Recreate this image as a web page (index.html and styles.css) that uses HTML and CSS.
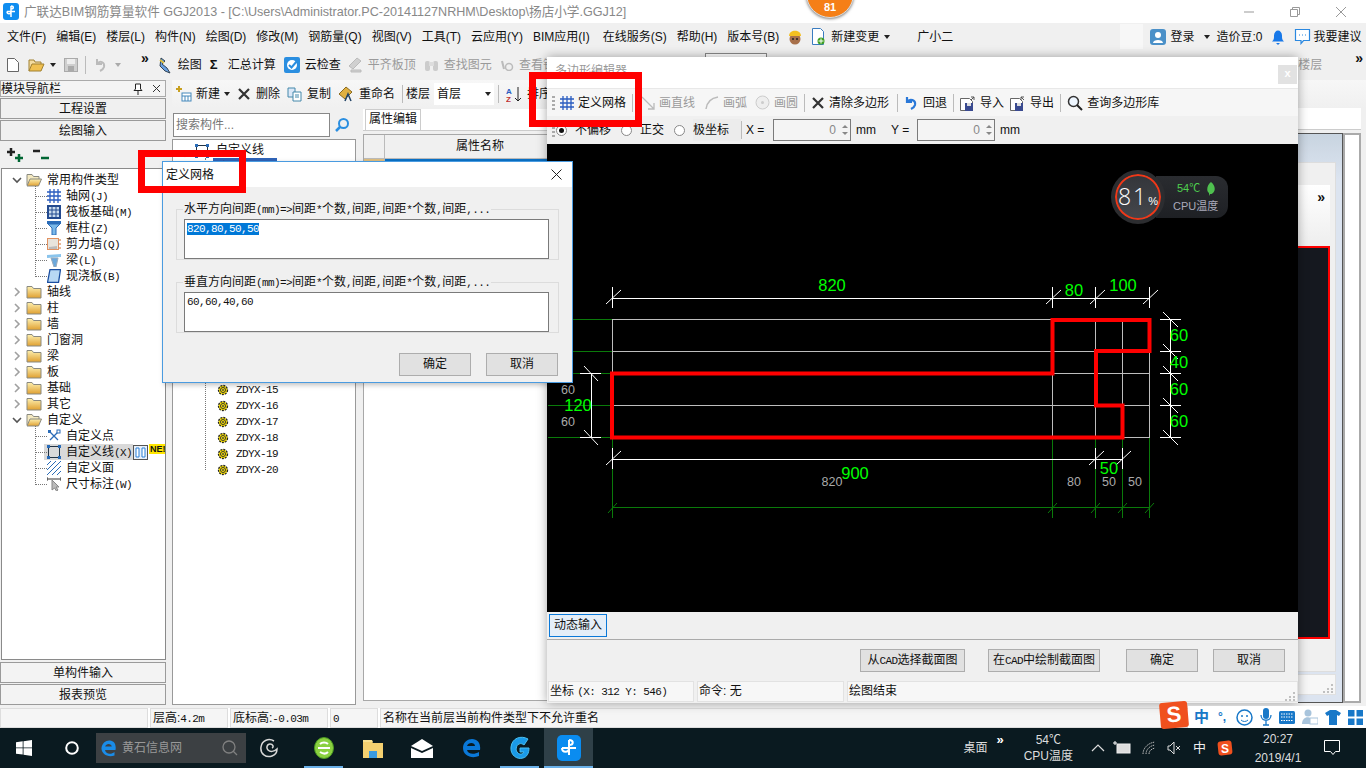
FILE: index.html
```html
<!DOCTYPE html>
<html lang="zh-CN">
<head>
<meta charset="utf-8">
<title>广联达BIM钢筋算量软件</title>
<link rel="stylesheet" href="styles.css">
</head>
<body>
<svg class="defs" width="0" height="0" aria-hidden="true">
  <defs>
    <linearGradient id="fg" x1="0" y1="0" x2="0" y2="1"><stop offset="0" stop-color="#fdf0b0"/><stop offset="1" stop-color="#e0a030"/></linearGradient>
    <symbol id="folder" viewBox="0 0 16 14"><path d="M1 3.500V1.500h5l1.500 2H15V13H1z" fill="url(#fg)" stroke="#8a8a80"/></symbol>
    <symbol id="folderopen" viewBox="0 0 16 14"><path d="M1 12V1.500h5l1.500 2H13V6" fill="#f4e9c0" stroke="#8a8a80"/><path d="M1 13 4 6h11.500l-3 7z" fill="url(#fg)" stroke="#8a8a80"/></symbol>
    <symbol id="gear" viewBox="0 0 12 12"><circle cx="6" cy="6" r="4.500" fill="#ffe600" stroke="#222" stroke-width="1.300" stroke-dasharray="2 1"/><circle cx="6" cy="6" r="2.500" fill="#ffe600" stroke="#333"/><circle cx="6" cy="6" r="1" fill="#444"/></symbol>
    <symbol id="chevr" viewBox="0 0 8 10"><path d="M2 1l4 4-4 4" fill="none" stroke="#a0a0a0" stroke-width="1.600"/></symbol>
    <symbol id="chevd" viewBox="0 0 10 8"><path d="M1 2l4 4 4-4" fill="none" stroke="#555" stroke-width="1.600"/></symbol>
    <symbol id="grid" viewBox="0 0 14 14"><path d="M0 3h14M0 7h14M0 11h14M3 0v14M7 0v14M11 0v14" stroke="#2a5cc0" stroke-width="1.300" fill="none"/></symbol>
    <symbol id="cross" viewBox="0 0 14 14"><path d="M2 2l10 10M12 2 2 12" stroke="#333" stroke-width="2.200" fill="none"/></symbol>
    <symbol id="cgrip" viewBox="0 0 10 10"><path d="M8 1h2v2H8zM4 5h2v2H4zM8 5h2v2H8zM0 8h2v2H0zM4 8h2v2H4zM8 8h2v2H8z" fill="#c0c0c0"/></symbol>
  </defs>
</svg>

<div class="app">
  <header class="titlebar">
    <svg class="appicon" width="16" height="17" viewBox="0 0 16 17"><rect width="16" height="17" rx="3" fill="#0f8df0"/><path d="M8 3v11M4 8.500h8M8 3c3 0 3 3 0 3M4 8.500c0 3 4 3 4 0" fill="none" stroke="#fff" stroke-width="1.500"/></svg>
    <span class="titletext">广联达BIM钢筋算量软件 GGJ2013 - [C:\Users\Administrator.PC-20141127NRHM\Desktop\扬店小学.GGJ12]</span>
    <div class="winctl">
      <svg width="12" height="12" viewBox="0 0 12 12"><path d="M1 6h10" stroke="#999"/></svg>
      <svg width="12" height="12" viewBox="0 0 12 12"><path d="M1.500 3.500h7v7h-7zM3.500 3.500v-2h7v7h-2" fill="none" stroke="#999"/></svg>
      <svg width="12" height="12" viewBox="0 0 12 12"><path d="M1 1l10 10M11 1 1 11" stroke="#999"/></svg>
    </div>
  </header>

  <nav class="menubar">
    <span>文件(F)</span><span>编辑(E)</span><span>楼层(L)</span><span>构件(N)</span><span>绘图(D)</span><span>修改(M)</span><span>钢筋量(Q)</span><span>视图(V)</span><span>工具(T)</span><span>云应用(Y)</span><span>BIM应用(I)</span><span class="m-online">在线服务(S)</span><span>帮助(H)</span><span>版本号(B)</span>
    <svg class="m-hat" width="16" height="16" viewBox="0 0 16 16"><circle cx="8" cy="10" r="5.500" fill="#a8704a"/><path d="M2 7c0-7 12-7 12 0z" fill="#f4c020"/><circle cx="6" cy="10" r="1" fill="#222"/><circle cx="10" cy="10" r="1" fill="#222"/></svg>
    <span class="m-new"><svg width="15" height="18" viewBox="0 0 15 18"><path d="M1.500.500h8l3 3v13h-11z" fill="#fff" stroke="#3a7cc0"/><circle cx="10" cy="13" r="3.500" fill="#3fa020"/><path d="M10 10.500v5M7.500 13h5" stroke="#fff"/></svg>新建变更<i class="caret m-caret"></i></span>
    <span class="m-xiao">广小二</span>
    <span class="m-blank"></span>
    <span class="m-user"><svg width="16" height="16" viewBox="0 0 16 16"><rect width="16" height="16" rx="3" fill="#4a90c8"/><circle cx="8" cy="6" r="3" fill="#fff"/><path d="M3 14c0-4 10-4 10 0z" fill="#fff"/></svg>登录<i class="caret m-caret2"></i></span>
    <span class="m-bean">造价豆:0</span>
    <svg class="m-bell" width="14" height="16" viewBox="0 0 14 16"><path d="M1 12.500c2-1.500 2-3 2-6s2-5 4-5 4 2 4 5 0 4.500 2 6z" fill="#1878e8"/><path d="M5 14h4l-2 2z" fill="#1878e8"/></svg>
    <svg class="m-chat" width="17" height="17" viewBox="0 0 17 17"><path d="M1.500 1.500h14v11h-6l-2.500 3v-3h-5.500z" fill="#fff" stroke="#2a88e0" stroke-width="1.200"/><path d="M5 7h1M8 7h1M11 7h1" stroke="#2a88e0"/></svg>
    <span class="m-sug">我要建议</span>
  </nav>

  <div class="toolbar1">
    <svg width="12" height="14" viewBox="0 0 12 14"><path d="M.500.500h7l4 4v9h-11z" fill="#fff" stroke="#666"/></svg>
    <svg class="t1-open" width="17" height="14" viewBox="0 0 17 14"><path d="M1 13V2h5l1 2h6v2" fill="#f4dca0" stroke="#a08030"/><path d="M1 13l3-7h12l-3 7z" fill="#f0c050" stroke="#a08030"/></svg>
    <i class="caret t1-c1"></i>
    <svg width="14" height="14" viewBox="0 0 14 14"><rect x=".5" y=".5" width="13" height="13" fill="#cfcfcf" stroke="#aaa"/><rect x="3" y="1" width="8" height="5" fill="#eee"/><rect x="4" y="8" width="6" height="5" fill="#aaa"/></svg>
    <i class="vsep t1-sep"></i>
    <svg width="12" height="14" viewBox="0 0 12 14"><path d="M3 1v5h5M3 6c3-4 8-2 7 3-.5 2-2 3-4 4" fill="none" stroke="#bbb" stroke-width="2"/></svg>
    <i class="caret grey t1-c2"></i>
    <b class="more t1-more">»</b>
    <span class="tg"><svg width="16" height="17" viewBox="0 0 16 17"><path d="M4 1l4 3-3 3 5 4 3 5-5-2-5-5z" fill="#6aa0e0" stroke="#345"/><path d="M3 3l4 3" stroke="#e0c040" stroke-width="2"/></svg>绘图</span>
    <span class="tg"><b class="sigma">Σ</b>汇总计算</span>
    <span class="tg"><svg width="16" height="16" viewBox="0 0 16 16"><rect width="16" height="16" rx="2" fill="#2a8ee0"/><circle cx="8" cy="8" r="5" fill="#fff"/><path d="M5 8l2.500 2.500L13 4" fill="none" stroke="#2a8ee0" stroke-width="2"/></svg>云检查</span>
    <span class="tg off t1-flat"><svg width="15" height="16" viewBox="0 0 15 16"><path d="M1 9l8-8 4 3-8 8zM3 13h10v2H3z" fill="#d0d0d0" stroke="#bbb"/></svg>平齐板顶</span>
    <span class="tg off"><svg width="15" height="14" viewBox="0 0 15 14"><rect x="1" y="3" width="5" height="10" rx="2" fill="#ccc"/><rect x="9" y="3" width="5" height="10" rx="2" fill="#ccc"/><rect x="5" y="4" width="5" height="4" fill="#ddd"/></svg>查找图元</span>
    <span class="tg off t1-look"><svg width="14" height="12" viewBox="0 0 14 12"><circle cx="9" cy="8" r="3.500" fill="none" stroke="#bbb" stroke-width="1.500"/><path d="M2 2l2 8" stroke="#bbb" stroke-width="2"/></svg>查看钢</span>
    <span class="tb-box"></span>
    <span class="tb-right"><span class="off">楼层</span><b class="more t1-more2">»</b></span>
  </div>

  <main class="main">
    <aside class="nav">
      <div class="navhead"><span>模块导航栏</span><span class="navpin">
        <svg width="10" height="12" viewBox="0 0 10 12"><path d="M2.500 1h5v5l1.500 1.500H1L2.500 6zM5 8v4" fill="#fff" stroke="#222"/></svg>
        <svg width="9" height="9" viewBox="0 0 9 9"><path d="M1 1l7 7M8 1 1 8" stroke="#333"/></svg></span></div>
      <div class="navbtn">工程设置</div>
      <div class="navbtn">绘图输入</div>
      <div class="navtools">
        <svg width="20" height="15" viewBox="0 0 20 15"><path d="M12 7v8M8 11h8" stroke="#063" stroke-width="2.500"/><path d="M4 1v8M0 5h8" stroke="#222" stroke-width="2.500"/></svg>
        <svg width="17" height="13" viewBox="0 0 17 13"><path d="M0 3h7" stroke="#222" stroke-width="2.500"/><path d="M8 10h8" stroke="#063" stroke-width="2.500"/></svg>
      </div>
      <div class="tree">
        <div class="tr"><svg class="ch" width="10" height="8"><use href="#chevd"/></svg><svg class="fd" width="16" height="14"><use href="#folderopen"/></svg>常用构件类型</div>
        <div class="kids">
          <div class="tc"><svg width="14" height="14"><use href="#grid"/></svg><span>轴网<span class="m">(J)</span></span></div>
          <div class="tc"><svg width="14" height="14" viewBox="0 0 14 14"><rect x="1" y="1" width="12" height="12" fill="#cde" stroke="#234a90" stroke-width="2"/><path d="M1 5h12M1 9h12M5 1v12M9 1v12" stroke="#234a90"/></svg><span>筏板基础<span class="m">(M)</span></span></div>
          <div class="tc"><svg width="14" height="14" viewBox="0 0 14 14"><path d="M0 0h14v3H0z" fill="#2a6cb8"/><path d="M1 3h12L9 7v7H5V7z" fill="#7ab8e8" stroke="#2a6cb8"/></svg><span>框柱<span class="m">(Z)</span></span></div>
          <div class="tc"><svg width="14" height="14" viewBox="0 0 14 14"><rect x=".5" y="1.500" width="11" height="11" fill="#e8e4dc" stroke="#e09060"/><path d="M2 10l8-1v3H2z" fill="#bbb"/><path d="M13 2v10" stroke="#d07030" stroke-dasharray="2 2"/></svg><span>剪力墙<span class="m">(Q)</span></span></div>
          <div class="tc"><svg width="14" height="14" viewBox="0 0 14 14"><path d="M0 2l14-1v3L0 5z" fill="#8ac4ec"/><path d="M4 5h7L9 14H7z" fill="#6aa8dc" stroke="#9ab"/></svg><span>梁<span class="m">(L)</span></span></div>
          <div class="tc"><svg width="14" height="14" viewBox="0 0 14 14"><path d="M3 .5h10.500l-2 13H.5z" fill="#b8d8f4" stroke="#1a4ea0" stroke-width="1.300"/></svg><span>现浇板<span class="m">(B)</span></span></div>
        </div>
        <div class="tr"><svg class="ch" width="8" height="10"><use href="#chevr"/></svg><svg class="fd" width="16" height="14"><use href="#folder"/></svg>轴线</div>
        <div class="tr"><svg class="ch" width="8" height="10"><use href="#chevr"/></svg><svg class="fd" width="16" height="14"><use href="#folder"/></svg>柱</div>
        <div class="tr"><svg class="ch" width="8" height="10"><use href="#chevr"/></svg><svg class="fd" width="16" height="14"><use href="#folder"/></svg>墙</div>
        <div class="tr"><svg class="ch" width="8" height="10"><use href="#chevr"/></svg><svg class="fd" width="16" height="14"><use href="#folder"/></svg>门窗洞</div>
        <div class="tr"><svg class="ch" width="8" height="10"><use href="#chevr"/></svg><svg class="fd" width="16" height="14"><use href="#folder"/></svg>梁</div>
        <div class="tr"><svg class="ch" width="8" height="10"><use href="#chevr"/></svg><svg class="fd" width="16" height="14"><use href="#folder"/></svg>板</div>
        <div class="tr"><svg class="ch" width="8" height="10"><use href="#chevr"/></svg><svg class="fd" width="16" height="14"><use href="#folder"/></svg>基础</div>
        <div class="tr"><svg class="ch" width="8" height="10"><use href="#chevr"/></svg><svg class="fd" width="16" height="14"><use href="#folder"/></svg>其它</div>
        <div class="tr"><svg class="ch" width="10" height="8"><use href="#chevd"/></svg><svg class="fd" width="16" height="14"><use href="#folderopen"/></svg>自定义</div>
        <div class="kids">
          <div class="tc"><svg width="14" height="14" viewBox="0 0 14 14"><path d="M3 3l8 8M11 3 3 11" stroke="#2a6cb8" stroke-width="1.300"/><rect x="1" y="1" width="3" height="3" fill="#2a6cb8"/><rect x="10" y="1" width="3" height="3" fill="#fff" stroke="#2a6cb8"/></svg><span>自定义点</span></div>
          <div class="tc sel"><svg width="14" height="14" viewBox="0 0 14 14"><rect x="1.500" y="1.500" width="11" height="11" fill="none" stroke="#234"/><rect y="0" width="3" height="3" fill="#2a6cb8"/><rect x="11" width="3" height="3" fill="#2a6cb8"/><rect y="11" width="3" height="3" fill="#2a6cb8"/><rect x="11" y="11" width="3" height="3" fill="#2a6cb8"/></svg><span>自定义线<span class="m">(X)</span></span>
            <svg class="minibtn" width="15" height="15" viewBox="0 0 15 15"><rect x=".5" y=".5" width="14" height="14" fill="#e8f0fa" stroke="#555"/><path d="M3 3h3v9H3zM9 3h3v9H9z" fill="#fff" stroke="#2a80d8"/></svg>
            <span class="newtag">NE!</span></div>
          <div class="tc"><svg width="14" height="14" viewBox="0 0 14 14"><rect width="14" height="14" fill="#fff"/><path d="M0 4l4-4M0 9l9-9M0 14 14 0M5 14l9-9M10 14l4-4" stroke="#2a6cb8"/></svg><span>自定义面</span></div>
          <div class="tc"><svg width="14" height="14" viewBox="0 0 14 14"><path d="M0 2h14M0 0v4M14 0v4" stroke="#333"/><path d="M5 3v10l2.500-2 2 3 1.500-1-2-3h3z" fill="#bbb" stroke="#888"/></svg><span>尺寸标注<span class="m">(W)</span></span></div>
        </div>
      </div>
      <div class="navbtn low">单构件输入</div>
      <div class="navbtn low">报表预览</div>
    </aside>

    <section class="work">
      <div class="toolbar2">
        <span class="tg tg2"><svg width="16" height="16" viewBox="0 0 16 16"><path d="M3 0v6M0 3h6" stroke="#c8a020" stroke-width="2"/><rect x="6" y="7" width="9" height="8" fill="#fff" stroke="#48b"/><path d="M6 10h9M9 10v5M12 10v5" stroke="#48b"/></svg><span class="t2-new">新建</span><i class="caret"></i></span>
        <span class="tg tg2"><svg width="14" height="14"><use href="#cross"/></svg>删除</span>
        <span class="tg tg2"><svg width="15" height="15" viewBox="0 0 15 15"><path d="M1 1h7v9H1z" fill="#dbe8f8" stroke="#48a"/><path d="M6 5h8v9H6z" fill="#fff" stroke="#48a"/><path d="M8 8h4M8 10h4" stroke="#48a"/></svg>复制</span>
        <span class="tg tg2"><svg width="16" height="16" viewBox="0 0 16 16"><path d="M1 8l7-7 6 5-7 7z" fill="#e0b040" stroke="#8a6a20"/><path d="M7 15l3-7 3 7" fill="none" stroke="#246" stroke-width="1.500"/></svg>重命名</span>
        <i class="vsep"></i>
        <span class="t2-floor">楼层</span>
        <span class="floor">首层<i class="caret"></i></span>
        <i class="vsep"></i>
        <span class="tg tg2"><svg width="16" height="17" viewBox="0 0 16 17"><text class="sorttxt" x="0" y="8">A</text><text class="sorttxt zred" x="0" y="16">Z</text><path d="M12 1v14M9 12l3 3 3-3" fill="none" stroke="#222"/></svg>排序</span>
      </div>
      <div class="workbody">
        <div class="comps">
          <div class="search"><span class="searchbox">搜索构件...</span><svg width="16" height="16" viewBox="0 0 16 16"><circle cx="9.500" cy="6.500" r="4.500" fill="none" stroke="#2a8ee0" stroke-width="2"/><path d="M6 10l-4 4" stroke="#2a8ee0" stroke-width="2.500"/></svg></div>
          <div class="complist">
            <div class="cr0"><svg width="10" height="8"><use href="#chevd"/></svg><svg width="14" height="14" viewBox="0 0 14 14"><rect x="1.500" y="1.500" width="11" height="11" fill="none" stroke="#234"/><rect width="3" height="3" fill="#2a6cb8"/><rect x="11" width="3" height="3" fill="#2a6cb8"/><rect y="11" width="3" height="3" fill="#2a6cb8"/><rect x="11" y="11" width="3" height="3" fill="#2a6cb8"/></svg><span>自定义线</span></div>
            <div class="crs">
              <div class="cr cursel"><svg width="12" height="12"><use href="#gear"/></svg></div>
              <div class="cr-hidden"></div>
              <div class="cr"><svg width="12" height="12"><use href="#gear"/></svg><span class="nm">ZDYX-15</span></div>
              <div class="cr"><svg width="12" height="12"><use href="#gear"/></svg><span class="nm">ZDYX-16</span></div>
              <div class="cr"><svg width="12" height="12"><use href="#gear"/></svg><span class="nm">ZDYX-17</span></div>
              <div class="cr"><svg width="12" height="12"><use href="#gear"/></svg><span class="nm">ZDYX-18</span></div>
              <div class="cr"><svg width="12" height="12"><use href="#gear"/></svg><span class="nm">ZDYX-19</span></div>
              <div class="cr"><svg width="12" height="12"><use href="#gear"/></svg><span class="nm">ZDYX-20</span></div>
            </div>
          </div>
        </div>
        <div class="props">
          <div class="tabs"><span class="tab">属性编辑</span></div>
          <div class="ptable">
            <div class="phead"><span class="pnum"></span><span class="pname">属性名称</span></div>
            <div class="prow"><span class="pnum act"></span><span class="pval"></span></div>
          </div>
        </div>
        <div class="rightcol">
          <div class="vtabs"></div>
          <div class="vrow">
            <div class="viewer">
              <div class="viewer-inner">
                <div class="vhead"><b class="more">»</b></div>
                <div class="vcanvas">
                  <svg class="vdraw" width="77" height="389" viewBox="1252 248 77 389">
                    <path d="M1299.500 406v82" stroke="#c8d8c8"/><path d="M1302.500 406v82" stroke="#6db060" stroke-width="1.500"/>
                    <path d="M1300 404l7-12h12" stroke="#555" fill="none"/><path d="M1309 391h11" stroke="#999" stroke-dasharray="2 1"/>
                    <path d="M1299 447h8" stroke="#777"/>
                  </svg>
                </div>
                <div class="vfoot"></div>
              </div>
              <div class="vstatus"><svg width="10" height="10"><use href="#cgrip"/></svg></div>
            </div>
            <div class="sidebox"></div>
          </div>
        </div>
      </div>
    </section>
  </main>

  <footer class="statusbar">
    <span class="sb sb0"></span>
    <span class="sb sb1">层高:<span class="m">4.2m</span></span>
    <span class="sb sb2">底标高:<span class="m">-0.03m</span></span>
    <span class="sb sb3"><span class="m">0</span></span>
    <span class="sb sb4">名称在当前层当前构件类型下不允许重名</span>
  </footer>

  <div class="taskbar">
    <svg class="tk-win" width="16" height="16" viewBox="0 0 16 16"><path d="M0 2.300 6.700 1.300v6.200H0zM7.500 1.200 16 0v7.500H7.500zM0 8.300h6.700v6.300L0 13.700zM7.500 8.300H16V16l-8.500-1.200z" fill="#fff"/></svg>
    <svg class="tk-cort" width="14" height="14" viewBox="0 0 14 14"><circle cx="7" cy="7" r="5.800" fill="none" stroke="#fff" stroke-width="2"/></svg>
    <div class="tk-search">
      <svg width="18" height="18" viewBox="0 0 18 18"><path d="M15.500 11H5c.5 4 6 5 9.500 2v3.500C8 19 1 15 1.500 9 2 4 6 1 10 1.500c4 .3 6.500 4 5.500 9.500zM5.200 7.500h6.600c-.3-3.500-6-3.500-6.600 0z" fill="#1a8ce8"/></svg>
      <span>黄石信息网</span>
      <svg class="tk-mag" width="16" height="16" viewBox="0 0 16 16"><circle cx="7" cy="7" r="6" fill="none" stroke="#808080" stroke-width="1.300"/><path d="M11 11l4 4" stroke="#808080" stroke-width="1.300"/></svg>
    </div>
    <div class="tk-apps">
      <span class="tk-app tk-first"><svg width="20" height="20" viewBox="0 0 20 20"><path d="M15 3C10 0 3 2 2 9s5 11 11 9c3-1 5-4 5-7-3 3-7 3-9 1s-1-6 2-6 4 3 2 4" fill="none" stroke="#d8d8d8" stroke-width="1.500"/></svg></span>
      <span class="tk-app run"><svg width="22" height="24" viewBox="0 0 22 24"><ellipse cx="11" cy="12" rx="9.500" ry="10.500" fill="#8ad040" stroke="#4a9a20"/><path d="M5 12h12M7 8c2-2 6-2 8 0M7 16c3 2 6 2 8 0" stroke="#fff" stroke-width="2" fill="none"/></svg></span>
      <span class="tk-app"><svg width="22" height="22" viewBox="0 0 22 22"><path d="M1 3h8l2 3h10v15H1z" fill="#f4d070"/><path d="M1 3h9l1 2H1z" fill="#f8e090"/><rect x="7" y="14" width="8" height="7" fill="#3a9ae0"/></svg></span>
      <span class="tk-app"><svg width="22" height="20" viewBox="0 0 22 20"><path d="M11 1l11 7-11 5L0 8z" fill="#fff"/><path d="M0 10l11 5 11-5v10H0z" fill="#fff"/></svg></span>
      <span class="tk-app"><svg width="20" height="20" viewBox="0 0 20 20"><path d="M19 12H6c.5 4 7 5 12 2v4c-7 3-16 0-16-8C2 4 7 1 11 1c6 0 9 5 8 11zM6 8h8c0-4-7-4-8 0z" fill="#0a78d8"/></svg></span>
      <span class="tk-app run"><svg width="22" height="24" viewBox="0 0 22 24"><path d="M19 3C12-1 3 2 2 11c-1 8 6 13 12 11 4-1 6-5 6-10h-9v4h4c-1 2-4 3-6 1-3-2-2-8 1-9 2-1 4 0 5 1z" fill="#1a9ae8" stroke="#4ac0f0"/></svg></span>
      <span class="tk-app active"><svg width="24" height="26" viewBox="0 0 24 26"><rect width="24" height="26" rx="5" fill="#0a8cf0"/><path d="M12 5v15M5 13h14M12 5c5 0 5 5 0 5M5 13c0 5 7 5 7 0" fill="none" stroke="#fff" stroke-width="2"/></svg></span>
    </div>
    <div class="tk-tray">
      <span class="tk-desk">桌面</span><b class="tk-more">»</b>
      <span class="tk-cpu"><span>54℃</span><span>CPU温度</span></span>
      <svg class="tk-up" width="14" height="8" viewBox="0 0 14 8"><path d="M1 7l6-6 6 6" fill="none" stroke="#ddd" stroke-width="1.200"/></svg>
      <svg width="18" height="14" viewBox="0 0 18 14"><rect x="4" y="3" width="13" height="9" fill="#ddd" stroke="#eee"/><path d="M2 0v4M0 2h4" stroke="#fff"/></svg>
      <svg width="14" height="14" viewBox="0 0 14 14"><path d="M1 13c0-6 5-11 12-12M4 13c0-4 3-8 9-9M7 13c0-3 2-5 6-6" fill="none" stroke="#bbb" stroke-dasharray="1.500 .8"/></svg>
      <svg width="15" height="14" viewBox="0 0 15 14"><path d="M1 5h2l4-4v12L3 9H1zM9 5l4 4M13 5 9 9" fill="none" stroke="#ddd"/></svg>
      <span class="tk-zh">中</span>
      <svg width="16" height="16" viewBox="0 0 16 16"><rect x="1" y="1" width="14" height="14" rx="3" fill="#f0501e" transform="rotate(-6 8 8)"/><text class="stext" x="4" y="13">S</text></svg>
      <span class="tk-clock"><span>20:27</span><span>2019/4/1</span></span>
      <svg class="tk-notif" width="16" height="16" viewBox="0 0 16 16"><path d="M.5.500h15v11h-4l-2.500 3-2.500-3H.5z" fill="none" stroke="#fff"/></svg>
    </div>
  </div>
</div>

<!-- floating windows -->
<div class="ball"><span>81</span></div>

<div class="editor">
  <div class="ed-title"><span>多边形编辑器</span><span class="ed-close">x</span></div>
  <div class="ed-tools">
    <i class="grip"></i>
    <span class="et"><svg width="14" height="14"><use href="#grid"/></svg>定义网格</span>
    <i class="vsep"></i>
    <span class="et off et1"><svg width="14" height="14" viewBox="0 0 14 14"><path d="M1 1l12 12M13 7v6H7" fill="none" stroke="#bbb" stroke-width="1.300"/></svg>画直线</span>
    <span class="et off et1"><svg width="14" height="14" viewBox="0 0 14 14"><path d="M1 13C2 6 6 2 13 1" fill="none" stroke="#bbb" stroke-width="1.500"/></svg>画弧</span>
    <span class="et off"><svg width="15" height="15" viewBox="0 0 15 15"><circle cx="7.500" cy="7.500" r="6.500" fill="#eee" stroke="#ccc"/><circle cx="7.500" cy="7.500" r="1.500" fill="#ccc"/></svg>画圆</span>
    <i class="vsep"></i>
    <span class="et et2"><svg width="14" height="14"><use href="#cross"/></svg>清除多边形</span>
    <i class="vsep"></i>
    <span class="et"><svg width="15" height="14" viewBox="0 0 15 14"><path d="M3 1v5h5M3 6c3-4 9-2 8 3-.5 2-2 3-4 4" fill="none" stroke="#2a78d8" stroke-width="2.200"/></svg>回退</span>
    <i class="vsep"></i>
    <span class="et"><svg width="16" height="16" viewBox="0 0 16 16"><path d="M.5 3.500h9l3 3v9H.5z" fill="#fff" stroke="#666"/><rect x="5" y="8" width="8" height="8" fill="#3a4a90"/><rect x="7" y="8" width="4" height="3" fill="#ddd"/><path d="M11 5l3-3M11 2h3v3" fill="none" stroke="#555"/></svg>导入</span>
    <span class="et"><svg width="16" height="16" viewBox="0 0 16 16"><path d="M.5 3.500h9l3 3v9H.5z" fill="#fff" stroke="#666"/><rect x="5" y="8" width="8" height="8" fill="#3a4a90"/><rect x="7" y="8" width="4" height="3" fill="#ddd"/><path d="M14 5l-3-3M14 2h-3v3" fill="none" stroke="#555"/></svg>导出</span>
    <i class="vsep"></i>
    <span class="et"><svg width="16" height="16" viewBox="0 0 16 16"><circle cx="6.500" cy="6.500" r="5" fill="#eef6ff" stroke="#333" stroke-width="1.500"/><path d="M10 10l5 5" stroke="#222" stroke-width="2"/></svg>查询多边形库</span>
  </div>
  <div class="ed-opts">
    <i class="grip opt-grip"></i>
    <span class="radio on"></span><span class="rl">不偏移</span>
    <span class="radio"></span><span class="rl">正交</span>
    <span class="radio"></span><span class="rl polar">极坐标</span>
    <i class="vsep opt-sep"></i>
    <span class="lbl lx">X =</span>
    <span class="spin"><span>0</span><span class="arrows"><i></i><i class="dn"></i></span></span>
    <span class="lbl lm">mm</span>
    <span class="lbl ly">Y =</span>
    <span class="spin"><span>0</span><span class="arrows"><i></i><i class="dn"></i></span></span>
    <span class="lbl lm">mm</span>
  </div>
  <div class="ed-canvas">
    <svg class="draw" width="750" height="468" viewBox="548 144 750 468">
      <g class="gl">
        <path d="M548 319.500h64M548 351.500h64M548 373.500h64M548 405.500h64M548 437.500h64"/>
        <path d="M612.500 437v81M1052.500 437v81M1095.500 437v81M1122.500 437v81M1149.500 437v81"/>
        <path d="M612 507.500h538"/>
        <path d="M608 513l9-10M1048 513l9-10M1091 513l9-10M1118 513l9-10M1145 513l9-10"/>
      </g>
      <g class="gr">
        <path d="M612 319.500h538M612 351.500h538M612 373.500h538M612 405.500h538M612 437.500h538"/>
        <path d="M612.500 319v118M1052.500 319v118M1095.500 319v118M1122.500 319v118M1149.500 319v118"/>
      </g>
      <g class="wh">
        <path d="M612 298.500h538M612.500 287v21M1052.500 287v21M1095.500 287v21M1149.500 287v21"/>
        <path d="M606 304l15-14M1046 304l15-14M1090 304l15-14M1143 304l15-14"/>
        <path d="M612 459.500h511M612.500 448v21M1095.500 448v21M1122.500 448v21"/>
        <path d="M606 465l15-14M1089 465l15-14M1116 465l15-14"/>
        <path d="M580 373.500h21M580 437.500h21M591.500 373v64"/>
        <path d="M584 366l14 15M584 430l14 15"/>
        <path d="M1160 319.500h21M1160 351.500h21M1160 373.500h21M1160 405.500h21M1160 437.500h21M1170.500 319v118"/>
        <path d="M1163 312l15 15M1163 344l15 15M1163 366l15 15M1163 398l15 15M1163 430l15 15"/>
      </g>
      <path class="redp" d="M612 373.500H1052.500V320H1149.500V351H1096V405.500H1122.500V437.500H612Z"/>
      <g class="dg">
        <text x="832" y="291">820</text><text x="1074" y="296">80</text><text x="1123" y="291">100</text>
        <text x="1179" y="341">60</text><text x="1179" y="368">40</text><text x="1179" y="395">60</text><text x="1179" y="427">60</text>
        <text x="578" y="411">120</text><text x="855" y="479">900</text><text x="1109" y="474">50</text>
      </g>
      <g class="dw">
        <text x="568" y="394">60</text><text x="568" y="426">60</text>
        <text x="832" y="486">820</text><text x="1074" y="486">80</text><text x="1109" y="486">50</text><text x="1135" y="486">50</text>
      </g>
    </svg>
  </div>
  <div class="ed-dyn"><span class="dynbtn">动态输入</span></div>
  <div class="ed-btns">
    <span class="btn b1">从<span class="m">CAD</span>选择截面图</span>
    <span class="btn b2">在<span class="m">CAD</span>中绘制截面图</span>
    <span class="btn b3">确定</span>
    <span class="btn b3">取消</span>
  </div>
  <div class="ed-status">
    <span class="es es1">坐标 <span class="m">(X: 312 Y: 546)</span></span>
    <span class="es es2">命令: 无</span>
    <span class="es es3">绘图结束<svg width="10" height="10"><use href="#cgrip"/></svg></span>
  </div>
</div>

<div class="dialog">
  <div class="dlg-title"><span>定义网格</span>
    <svg width="11" height="11" viewBox="0 0 11 11"><path d="M.5.500l10 10M10.500.500l-10 10" stroke="#222"/></svg>
  </div>
  <div class="dlg-body">
    <fieldset class="grp">
      <legend>水平方向间距<span class="m">(mm)=&gt;</span>间距<span class="m">*</span>个数<span class="m">,</span>间距<span class="m">,</span>间距<span class="m">*</span>个数<span class="m">,</span>间距<span class="m">,...</span></legend>
      <div class="ta"><span class="m hl">820,80,50,50</span></div>
    </fieldset>
    <fieldset class="grp">
      <legend>垂直方向间距<span class="m">(mm)=&gt;</span>间距<span class="m">*</span>个数<span class="m">,</span>间距<span class="m">,</span>间距<span class="m">*</span>个数<span class="m">,</span>间距<span class="m">,...</span></legend>
      <div class="ta"><span class="m">60,60,40,60</span></div>
    </fieldset>
    <div class="dlg-btns"><span class="btn b3">确定</span><span class="btn b3">取消</span></div>
  </div>
</div>

<div class="cpu">
  <div class="cpu-ring"><span class="cpu-n">81</span><span class="cpu-p">%</span></div>
  <div class="cpu-pill">
    <span class="cpu-t">54℃<svg width="10" height="14" viewBox="0 0 10 14"><path d="M6 0c4 3 5 8 2 11-1 1-2 1-3 1l-1 2V11C1 9 2 3 6 0z" fill="#4fc04f"/></svg></span>
    <span class="cpu-l">CPU温度</span>
  </div>
</div>

<div class="mark mark-a"></div>
<div class="mark mark-b"></div>

<div class="sogou">
  <span class="sg-s">S</span>
  <div class="sg-row">
    <span class="sg-zh">中</span>
    <span class="sg-dot">°,</span>
    <svg width="17" height="17" viewBox="0 0 17 17"><circle cx="8.500" cy="8.500" r="7.500" fill="none" stroke="#1878c8" stroke-width="1.500"/><circle cx="6" cy="7" r="1" fill="#1878c8"/><circle cx="11" cy="7" r="1" fill="#1878c8"/><path d="M5 11c2 2 5 2 7 0" fill="none" stroke="#1878c8"/></svg>
    <svg width="12" height="18" viewBox="0 0 12 18"><rect x="3" width="6" height="11" rx="3" fill="#1878c8"/><path d="M1 7c0 7 10 7 10 0M6 13v4M3 17h6" fill="none" stroke="#1878c8" stroke-width="1.300"/></svg>
    <svg width="16" height="13" viewBox="0 0 16 13"><rect width="16" height="13" rx="1.500" fill="#1878c8"/><path d="M2 3h12M2 6h12M2 9.500h12" stroke="#fff" stroke-dasharray="1.500 1"/></svg>
    <svg width="16" height="16" viewBox="0 0 16 16"><circle cx="6" cy="4" r="3.500" fill="#a8c4dc"/><path d="M0 15c0-9 11-9 11 0z" fill="#a8c4dc"/><rect x="8" y="9" width="8" height="6" fill="#fff" stroke="#a8c4dc"/></svg>
    <svg width="16" height="16" viewBox="0 0 16 16"><path d="M5 1h6l5 3-2 3-2-1v10H4V6L2 7 0 4z" fill="#1878c8"/></svg>
    <svg width="15" height="15" viewBox="0 0 15 15"><rect width="6.500" height="6.500" fill="#1878c8"/><rect x="8.500" width="6.500" height="6.500" fill="#1878c8"/><rect y="8.500" width="6.500" height="6.500" fill="#1878c8"/><rect x="8.500" y="8.500" width="6.500" height="6.500" fill="#1878c8"/></svg>
  </div>
</div>
</body>
</html>
```

FILE: styles.css
```css
* { box-sizing: border-box; }
html, body { margin: 0; padding: 0; }
body {
  width: 1366px; height: 768px; overflow: hidden; position: relative;
  background: #f0f0f0; color: #111;
  font: 12px/16px "Liberation Sans", "Noto Sans CJK SC", sans-serif;
}
svg { display: block; flex: none; }
i { font-style: normal; }
.defs { position: absolute; }
.m { font-family: "Liberation Mono", "Noto Sans CJK SC", monospace; font-size: 11px; letter-spacing: -.6px; }
.off { color: #9a9a9a; }
.app { width: 1366px; height: 768px; display: flex; flex-direction: column; }

.titlebar { height: 23px; background: #fff; display: flex; align-items: center; padding-left: 3px; gap: 5px; flex: none; }
.titletext { font-size: 12.6px; color: #888; white-space: nowrap; }
.winctl { margin-left: auto; display: flex; gap: 34px; padding-right: 19px; }

.menubar { height: 27px; background: #f0f0f0; display: flex; align-items: center; padding-left: 7px; gap: 10px; flex: none; white-space: nowrap; }
.caret { display: inline-block; width: 0; height: 0; border: 3px solid transparent; border-top: 4px solid #222; border-bottom: 0; flex: none; }
.caret.grey { border-top-color: #aaa; }
.m-online { margin-left: 3px; }
.m-hat { margin-left: -2px; }
.m-new { display: flex; align-items: center; gap: 5px; margin-left: -2px; }
.m-caret { margin-left: 0; }
.m-xiao { margin-left: 17px; }
.m-blank { width: 23px; height: 25px; flex: none; background: #f7f7f7; margin-left: 157px; }
.m-user { display: flex; align-items: center; gap: 4px; margin-left: -3px; }
.m-caret2 { margin-left: 6px; }
.m-bean { margin-left: -4px; }
.m-bell { margin-left: -1px; }
.m-chat { margin-left: -1px; }
.m-sug { margin-left: -8px; }

.toolbar1 { height: 30px; background: #f0f0f0; display: flex; align-items: center; padding-left: 7px; gap: 8px; flex: none; white-space: nowrap; position: relative; }
.vsep { width: 1px; height: 18px; background: #bbb; flex: none; }
.t1-open { margin-left: 1px; }
.t1-c1 { margin-left: -3px; }
.t1-sep { margin-left: -1px; }
.t1-c2 { margin-left: 1px; }
.t1-more { margin-left: 12px; margin-bottom: 14px; }
.t1-more2 { margin-bottom: 14px; }
.t1-flat { margin-left: -1px; }
.more { font-size: 14px; line-height: 12px; font-weight: 700; color: #111; }
.tg { display: inline-flex; align-items: center; gap: 5px; white-space: nowrap; }
.sigma { width: 10px; font-size: 13px; margin-right: 3px; }
.tb-box { position: absolute; left: 705px; top: 3px; width: 62px; height: 8px; background: #fff; border: 1px solid #888; }
.tb-right { margin-left: auto; display: flex; gap: 33px; padding-right: 3px; align-items: center; }

.main { flex: 1; display: flex; min-height: 0; }
.nav { width: 166px; flex: none; display: flex; flex-direction: column; padding-bottom: 3px; }
.navhead { height: 17px; border: 1px solid #aaa; background: #f4f4f4; display: flex; justify-content: space-between; align-items: center; font-size: 12px; padding: 0 4px 0 0; }
.navpin { display: flex; gap: 9px; align-items: center; }
.navbtn { height: 21px; margin-top: 1px; background: #f0f0f0; border: 1px solid #9a9a9a; text-align: center; line-height: 20px; }
.navbtn.low { background: #f3f3f3; }
.navtools { height: 27px; display: flex; gap: 6px; align-items: center; padding-left: 7px; background: #f0f0f0; }
.tree { flex: 1; background: #fff; border: 1px solid #8a8a8a; padding-top: 3px; margin: 0 0 1px 1px; overflow: hidden; }
.tr { height: 16px; display: flex; align-items: center; padding-left: 10px; position: relative; white-space: nowrap; }
.tr .ch { width: 10px; margin-right: 4px; }
.tr .fd { margin-right: 5px; }
.kids { position: relative; }
.kids::before { content: ""; position: absolute; left: 33px; top: -2px; bottom: 7px; border-left: 1px dotted #777; }
.tc { height: 16px; display: flex; align-items: center; padding-left: 45px; gap: 5px; position: relative; white-space: nowrap; }
.tc::before { content: ""; position: absolute; left: 34px; top: 8px; width: 11px; border-top: 1px dotted #777; }
.tc.sel { background: linear-gradient(#d9d9d9, #d9d9d9) 42px 0 / 89px 16px no-repeat; }
.minibtn { margin-left: -4px; }
.newtag { font: 700 9px/10px "Liberation Sans", sans-serif; background: #ffe600; color: #111; margin: -6px 0 0 -4px; padding: 0 1px; }

.work { flex: 1; display: flex; flex-direction: column; padding-left: 6px; min-width: 0; }
.toolbar2 { height: 28px; flex: none; display: flex; align-items: center; padding-left: 4px; gap: 7px; background: linear-gradient(#f7f7f7, #f0f0f0); white-space: nowrap; }
.tg2 { gap: 5px; }
.t2-new { margin-left: -1px; margin-right: -1px; }
.t2-floor { margin-left: -4px; }
.floor { width: 60px; height: 22px; background: #fff; display: flex; justify-content: space-between; align-items: center; padding: 0 3px 0 3px; margin: 0 -3px 0 -3px; font-size: 12px; }
.sorttxt { font: 700 8px "Liberation Sans", sans-serif; fill: #2a5cc0; }
.sorttxt.zred { fill: #c03030; }
.workbody { flex: 1; display: flex; min-height: 0; }
.comps { width: 184px; flex: none; display: flex; flex-direction: column; margin-right: 7px; }
.search { height: 31px; flex: none; display: flex; align-items: center; gap: 4px; padding: 5px 0 2px 1px; }
.searchbox { width: 157px; height: 24px; background: #fff; border: 1px solid #888; color: #777; line-height: 22px; padding-left: 2px; }
.complist { flex: 1; background: #fff; border: 1px solid #999; overflow: hidden; margin-bottom: 3px; }
.cr0 { height: 18px; display: flex; align-items: flex-end; gap: 5px; padding-left: 7px; }
.cr0 span { margin-left: 2px; }
.crs { position: relative; }
.crs::before { content: ""; position: absolute; left: 32px; top: 0; bottom: 8px; border-left: 1px dotted #777; }
.cr { height: 16px; display: flex; align-items: center; padding-left: 44px; gap: 7px; }
.cr-hidden { height: 208px; }
.nm { font: 11px/16px "Liberation Mono", monospace; letter-spacing: -.6px; color: #111; }
.cursel { background: linear-gradient(#2f63b8, #2f63b8) 40px 0 / 64px 16px no-repeat; }
.props { width: 546px; flex: none; display: flex; flex-direction: column; margin-bottom: 7px; }
.tabs { height: 22px; margin-top: 1px; padding: 0 0 0 2px; background: #fff; border-bottom: 1px solid #ccc; flex: none; }
.tab { display: inline-block; height: 21px; width: 56px; background: #fff; border: 1px solid #ccc; border-bottom: 0; text-align: center; line-height: 18px; }
.ptable { flex: 1; margin-top: 3px; background: #fff; border: 1px solid #a8a8a8; }
.phead { height: 24px; display: flex; border-bottom: 1px solid #bbb; background: #f0f0f0; }
.pnum { width: 21px; border-right: 1px solid #bbb; }
.pname { width: 190px; text-align: center; line-height: 23px; }
.prow { height: 18px; display: flex; }
.act { background: #e0bf80; }
.pval { flex: 1; background: #0a72c8; }
.rightcol { flex: 1; min-width: 0; display: flex; flex-direction: column; }
.vtabs { height: 22px; flex: none; background: #fff; border-bottom: 1px solid #ccc; margin-right: 5px; }
.vrow { flex: 1; min-height: 0; display: flex; padding-top: 3px; padding-bottom: 5px; }
.viewer { flex: 1; background: linear-gradient(#c8d4e0, #dce4f0 8%); border: 1px solid #555; border-width: 1px 1px 1px 0; padding-top: 28px; padding-right: 6px; display: flex; flex-direction: column; min-width: 0; }
.viewer-inner { flex: 1; background: #f0f0f0; border: 1px solid #ddd; display: flex; flex-direction: column; min-height: 0; padding-right: 5px; }
.vhead { height: 61px; padding: 5px 5px 0 0; text-align: right; background: linear-gradient(#fff, #eee); margin-top: 22px; flex: none; }
.vcanvas { height: 393px; background: #15181f; border: 2px solid #f00; position: relative; flex: none; }
.vdraw { position: absolute; left: 0; top: 0; }
.vfoot { flex: 1; }
.vstatus { height: 21px; flex: none; margin: 2px 0 7px; background: #f7f7f7; border: 1px solid #e0e0e0; display: flex; justify-content: flex-end; align-items: flex-end; padding: 0 2px 1px 0; }
.sidebox { width: 18px; flex: none; margin: 0 5px 0 0; background: #fff; border: 2px solid #aaa; }

.statusbar { height: 20px; display: flex; gap: 2px; flex: none; background: #fff; white-space: nowrap; }
.sb { border: 1px solid #ddd; background: #f5f5f5; padding-left: 2px; line-height: 18px; }
.sb0 { width: 148px; }
.sb1 { width: 78px; }
.sb2 { width: 98px; }
.sb3 { width: 48px; }
.sb4 { flex: 1; }

.taskbar { height: 40px; background: #0a1a20; color: #ddd; display: flex; align-items: center; flex: none; position: relative; }
.tk-win { margin-left: 16px; }
.tk-cort { margin-left: 33px; }
.tk-search { width: 150px; height: 30px; margin-left: 17px; background: #3c4043; display: flex; align-items: center; padding: 0 8px 0 4px; gap: 4px; color: #999; }
.tk-mag { margin-left: auto; }
.tk-apps { display: flex; height: 40px; margin-left: -2px; }
.tk-first { margin-right: 6px; }
.tk-app { width: 49px; height: 40px; display: flex; align-items: center; justify-content: center; position: relative; }
.tk-app.run::after, .tk-app.active::after { content: ""; position: absolute; left: 5px; right: 5px; bottom: 0; height: 2px; background: #6ab0e8; }
.tk-app.active { background: #2f4048; }
.tk-app.active::after { left: 0; right: 0; }
.tk-tray { margin-left: auto; display: flex; align-items: center; gap: 11px; padding-right: 26px; }
.tk-desk { margin-right: -2px; }
.tk-more { font-size: 13px; margin-top: -16px; color: #fff; }
.tk-cpu { display: flex; flex-direction: column; align-items: center; margin: 0 7px 0 9px; }
.tk-up { margin-right: -3px; }
.tk-zh { font-size: 13px; color: #eee; }
.stext { font: 700 12px "Liberation Sans", sans-serif; fill: #fff; }
.tk-clock { display: flex; flex-direction: column; align-items: center; gap: 3px; width: 52px; margin: 0 9px 0 8px; }

.ball { position: absolute; left: 806px; top: -30px; width: 48px; height: 48px; border-radius: 50%; background: #f57f17; border: 1px solid #ddd; box-shadow: 0 1px 3px rgba(0,0,0,.5); color: #fff; font-weight: 700; font-size: 11px; text-align: center; padding-top: 29px; line-height: 14px; }

.editor { position: absolute; left: 547px; top: 57px; width: 751px; height: 646px; background: #f0f0f0; box-shadow: 0 0 10px rgba(0,0,0,.35); display: flex; flex-direction: column; }
.ed-title { height: 31px; background: #fff; display: flex; justify-content: space-between; padding: 6px 1px 0 8px; color: #999; flex: none; }
.ed-close { width: 19px; height: 19px; margin-top: 2px; background: #e2e2e2; color: #fff; text-align: center; line-height: 17px; font-size: 11px; font-weight: 700; }
.ed-tools { height: 28px; background: #f6f6f6; border-top: 1px solid #e8e8e8; display: flex; align-items: center; padding-left: 5px; gap: 6px; flex: none; white-space: nowrap; }
.grip { width: 3px; height: 14px; flex: none; background: repeating-linear-gradient(#aaa 0 2px, transparent 2px 4px); margin-right: -1px; }
.et { display: inline-flex; align-items: center; gap: 4px; }
.et1 { margin-right: 2px; margin-left: 2px; }
.et2 { margin-right: 2px; }
.ed-opts { height: 28px; display: flex; align-items: center; padding-left: 5px; flex: none; white-space: nowrap; }
.opt-grip { margin-right: 1px; }
.radio { width: 11px; height: 11px; border-radius: 50%; border: 1px solid #888; background: #fff; margin-right: 8px; position: relative; flex: none; }
.radio.on::after { content: ""; position: absolute; left: 2px; top: 2px; width: 5px; height: 5px; border-radius: 50%; background: #111; }
.rl { margin-right: 10px; }
.rl.polar { width: 48px; margin-right: 0; background: #ececec; line-height: 22px; }
.opt-sep { margin-right: 4px; }
.lbl { font-size: 12px; }
.lx { width: 27px; }
.lm { margin-left: 5px; }
.ly { width: 26px; margin-left: 15px; }
.spin { width: 78px; height: 22px; background: #f4f4f4; border: 1px solid #7a7a7a; display: flex; justify-content: flex-end; align-items: center; color: #888; gap: 6px; padding-right: 2px; }
.arrows { display: flex; flex-direction: column; gap: 4px; }
.arrows i { width: 0; height: 0; border: 3px solid transparent; border-top: 0; border-bottom: 3px solid #888; }
.arrows i.dn { border-bottom: 0; border-top: 3px solid #888; }
.ed-canvas { height: 468px; background: #000; flex: none; }
.draw { width: 750px; height: 468px; margin-left: 1px; }
.gl path { stroke: #0a7a0a; fill: none; }
.gr path { stroke: #bdbdbd; fill: none; }
.wh path { stroke: #fff; fill: none; }
.redp { fill: none; stroke: #f00; stroke-width: 4; }
.dg text { font: 16.5px "Liberation Sans", sans-serif; fill: #0f0; text-anchor: middle; }
.dw text { font: 12.5px "Liberation Sans", sans-serif; fill: #aaa; text-anchor: middle; }
.ed-dyn { height: 28px; border-bottom: 1px solid #aaa; padding: 2px 0 0 2px; flex: none; }
.dynbtn { display: inline-block; width: 58px; height: 23px; border: 1px solid #0a78d8; background: #e4eef8; text-align: center; line-height: 21px; }
.ed-btns { height: 41px; display: flex; justify-content: flex-end; align-items: center; padding: 0 13px 0 0; gap: 15px; flex: none; }
.btn { display: inline-block; height: 23px; background: #e1e1e1; border: 1px solid #adadad; text-align: center; line-height: 21px; white-space: nowrap; }
.b1 { width: 105px; margin-right: 8px; }
.b2 { width: 112px; margin-right: 11px; }
.b3 { width: 72px; }
.ed-status { height: 21px; display: flex; gap: 3px; padding-left: 1px; flex: none; white-space: nowrap; background: #f0f0f0; }
.es { background: #f7f7f7; border: 1px solid #e2e2e2; line-height: 19px; padding-left: 1px; }
.es1 { width: 146px; }
.es2 { width: 147px; }
.es3 { flex: 1; display: flex; justify-content: space-between; align-items: flex-end; padding-right: 2px; }

.dialog { position: absolute; left: 162px; top: 161px; width: 411px; height: 222px; background: #f0f0f0; border: 1px solid #4a9be0; box-shadow: 2px 2px 5px rgba(0,0,0,.25); display: flex; flex-direction: column; }
.dlg-title { height: 25px; background: #fff; display: flex; justify-content: space-between; align-items: center; padding: 0 10px 0 3px; flex: none; }
.dlg-body { flex: 1; padding: 15px 13px 0; position: relative; }
.grp { margin: 0 0 7px; padding: 0 9px 7px 7px; border: 1px solid #dcdcdc; height: 58px; }
.grp + .grp { margin-top: 15px; }
legend { padding: 0 1px; margin-left: -1px; line-height: 14px; white-space: nowrap; }
.ta { height: 40px; background: #fff; border: 1px solid #7a7a7a; padding: 1px 2px; line-height: 14px; margin-top: 2px; }
.hl { background: #0078d7; color: #fff; }
.dlg-btns { display: flex; justify-content: flex-end; gap: 15px; margin-top: 20px; padding-right: 1px; }

.cpu { position: absolute; left: 1111px; top: 170px; display: flex; align-items: center; }
.cpu-ring { width: 54px; height: 54px; border-radius: 50%; background: linear-gradient(#33353a, #45474c); border: 4px solid #2c2d30; box-shadow: inset 0 0 0 2px #f03818; display: flex; align-items: baseline; justify-content: center; color: #fff; padding-top: 9px; position: relative; z-index: 1; }
.cpu-n { font-size: 23px; line-height: 26px; letter-spacing: 2px; font-family: "Open Sans", sans-serif; font-weight: 300; }
.cpu-p { font-size: 11px; }
.cpu-pill { width: 72px; height: 42px; margin-left: -9px; background: linear-gradient(#2a2c30, #1e2024); border-radius: 0 12px 12px 0; padding: 5px 0 0 17px; color: #aab; font-size: 11px; line-height: 15px; display: flex; flex-direction: column; gap: 3px; }
.cpu-t { color: #4fd04f; display: flex; gap: 5px; align-items: center; padding-left: 4px; }

.mark { position: absolute; border: 7px solid #f00; }
.mark-a { left: 529px; top: 72px; width: 113px; height: 55px; }
.mark-b { left: 138px; top: 150px; width: 108px; height: 43px; }

.sogou { position: absolute; left: 1160px; top: 702px; height: 26px; width: 206px; display: flex; align-items: flex-end; }
.sg-s { width: 28px; height: 26px; background: #f0501e; color: #fff; font: 700 22px/26px "Liberation Sans", sans-serif; text-align: center; transform: rotate(-5deg); flex: none; border-radius: 3px; position: relative; z-index: 1; }
.sg-row { flex: 1; height: 22px; background: #fff; display: flex; align-items: center; padding-left: 6px; gap: 7px; color: #1878c8; }
.sg-zh { font-size: 15px; font-weight: 700; margin-right: 2px; }
.sg-dot { font-weight: 700; width: 11px; }
```
